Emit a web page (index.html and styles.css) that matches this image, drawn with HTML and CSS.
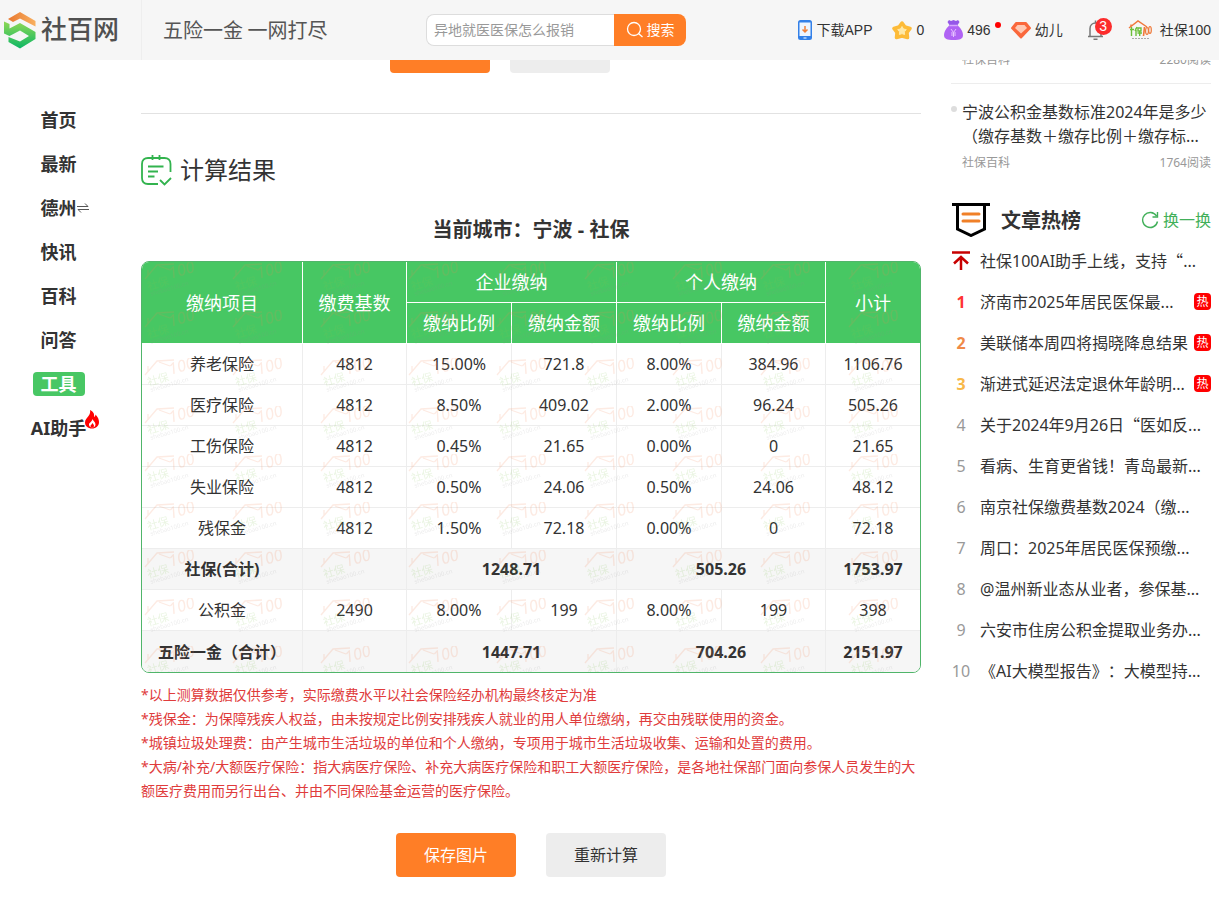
FILE: index.html
```html
<!DOCTYPE html>
<html lang="zh-CN">
<head>
<meta charset="utf-8">
<meta name="viewport" content="width=device-width, initial-scale=1">
<title>社保计算器 - 社百网</title>
<link rel="stylesheet" href="styles.css">
</head>
<body>
<header class="topbar">
  <a class="brand" href="#">
    <svg class="brand-mark" viewBox="0 0 32 38" aria-hidden="true">
      <defs>
        <linearGradient id="lo" x1="0" x2="1"><stop offset="0" stop-color="#e87830"/><stop offset="1" stop-color="#f8b060"/></linearGradient>
        <linearGradient id="lg" x1="0" x2="0" y1="0" y2="1"><stop offset="0" stop-color="#8fd855"/><stop offset="1" stop-color="#0cb765"/></linearGradient>
      </defs>
      <path fill="url(#lo)" d="M4 8 16 1l15.500 9v5.500L16 7.500 9 11z"/>
      <path fill="url(#lg)" d="M0 10.500 5.500 13v4.500L16 12l15.500 9v7L16 37.500 4.500 31v-5L16 30.500l9-5.500-9-5.500L5.500 25 0 22.500z"/>
    </svg>
    <span>社百网</span>
  </a>
  <p class="slogan">五险一金 一网打尽</p>
  <form class="search">
    <input type="search" aria-label="搜索内容" placeholder="异地就医医保怎么报销">
    <button type="button">
      <svg width="18" height="18" viewBox="0 0 18 18" fill="none" stroke="currentColor" stroke-width="1.300" aria-hidden="true"><circle cx="8" cy="8" r="6.500"/><path d="M12.500 12.500 16.500 16"/></svg>
      搜索
    </button>
  </form>
  <nav class="account" aria-label="账户">
    <a href="#">
      <svg width="14" height="20" viewBox="0 0 14 20" aria-hidden="true"><rect width="14" height="20" rx="2.500" fill="#3380e8"/><rect x="1.500" y="2.500" width="11" height="13.500" fill="#eef5ff"/><path d="M7 6v6M4.500 9.500 7 12l2.500-2.500" fill="none" stroke="#f08038" stroke-width="1.500"/><path d="M5.500 18h3" stroke="#fff"/></svg>
      下载APP
    </a>
    <a href="#">
      <svg width="20" height="20" viewBox="0 0 20 20" stroke-linejoin="round" aria-hidden="true"><path d="M10 3l3 4 5 1.500-3 4 .5 5L10 16l-5.500 1.500.5-5-3-4L7 7z" fill="#fdbb38" stroke="#fdbb38" stroke-width="3.500"/><path d="M10 6.500l1.500 2.500 2.800.6-1.900 2.200.2 2.700-2.600-.9-2.600.9.200-2.700-1.900-2.200 2.800-.6z" fill="#ffe9a8" stroke="#ffe9a8"/></svg>
      0
    </a>
    <a class="has-dot" href="#">
      <svg width="19" height="20" viewBox="0 0 19 20" aria-hidden="true"><path d="M5 0l2 1 2.500-1L12 1l2-1 1.500 2-2.500 4h-7L3.500 2z" fill="#9558e8"/><path d="M6 5h7c3 2 6 6.500 6 10 0 4-3 5-9.500 5S0 19 0 15C0 11.500 3 7 6 5z" fill="#b063f4"/><path d="M5.500 5.500h8" stroke="#d7a9ff" stroke-width="1.500"/><path d="M7 9l2.500 3.500L12 9M9.500 12.500V17M7 13h5M7 15h5" stroke="#e6c4ff" fill="none"/></svg>
      496
    </a>
    <a href="#">
      <svg width="20" height="18" viewBox="0 0 20 18" stroke-linejoin="round" aria-hidden="true"><path d="M5 2h10l4 5-9 9.500L1 7z" fill="#fa683c" stroke="#fa683c" stroke-width="2"/><path d="M6.500 4h7L16 7l-6 5.500L4 7z" fill="#ffc9b4"/></svg>
      幼儿
    </a>
    <a class="bell" href="#" aria-label="消息 3">
      <svg width="17" height="20" viewBox="0 0 17 20" fill="none" stroke="#777" stroke-width="1.500" aria-hidden="true"><path d="M1 16.500h15M3 16V8.500C3 5 5.500 3 8.500 3S14 5 14 8.500V16M8.500 3V.5M6.500 19.200h4"/></svg>
      <span class="count">3</span>
    </a>
    <a class="profile" href="#">
      <svg width="24" height="20" viewBox="0 0 24 20" fill="none" aria-hidden="true"><path d="M1 8 10 1l9 6M3 4.500V6" stroke="#f0783c" stroke-width="1.500"/><path d="M3.500 7v9M2 9.500h4M8 8v8M7 11l2-4M10 8h3v3h-3zM9.500 13H14M11.700 11v5" stroke="#6cbf3a" stroke-width="1.400"/><path d="M16.500 7 15.500 16" stroke="#ef7838" stroke-width="1.600"/><ellipse cx="19" cy="11" rx="1.400" ry="3.500" stroke="#ef7838" stroke-width="1.200"/><ellipse cx="22" cy="10" rx="1.300" ry="3.500" stroke="#ef7838" stroke-width="1.200"/><path d="M4 18.500h17" stroke="#aaa" stroke-dasharray="2 1"/></svg>
      社保100
    </a>
  </nav>
</header>

<div class="page">
  <nav class="sidenav" aria-label="主导航">
    <a href="#"><span>首页</span></a>
    <a href="#"><span>最新</span></a>
    <a href="#"><span>德州<svg class="swap" width="12" height="10" viewBox="0 0 12 10" fill="none" stroke="#555" aria-hidden="true"><path d="M0 3.500h11L8 .5M12 6.500H1l3 3"/></svg></span></a>
    <a href="#"><span>快讯</span></a>
    <a href="#"><span>百科</span></a>
    <a href="#"><span>问答</span></a>
    <a class="active" href="#"><span>工具</span></a>
    <a href="#"><span>AI助手<svg class="fire" width="14" height="19" viewBox="0 0 14 19" aria-hidden="true"><path d="M5 0c4 2 4.500 4.500 4 7 1-.5 1.500-1.500 1.500-2.500C13 7 14 9.500 14 12c0 4-3 6.500-7 6.500S0 16 0 12.500C0 9.500 2 8 3.500 6 5 4 5.500 2 5 0z" fill="#f00"/><path d="M7.500 9c.5 2 3 3 3 5.500 0 2-1.500 3-3.300 3S4 16.500 4 14.500C4 12.500 7 12 7.500 9z" fill="#fff"/><path d="M7.300 13c1 1.200 1.700 1.700 1.700 3 0 .8-.8 1.500-1.800 1.500S5.500 17 5.500 16c0-1 1.500-1.500 1.800-3z" fill="#f00"/></svg></span></a>
  </nav>

  <main class="content">
    <div class="form-actions">
      <button class="btn primary" type="button" aria-label="开始计算"></button>
      <button class="btn" type="button" aria-label="重置"></button>
    </div>
    <h2 class="result-title">
      <svg width="31" height="31" viewBox="0 0 31 31" fill="none" stroke="#32b34e" stroke-width="1.800" aria-hidden="true"><path d="M29.500 17V9c0-4-2.500-6-6-6H7C3.500 3 1 5 1 9v14c0 4 2.500 6 6 6h10"/><path d="M11.500 0v5M18.500 0v5M7 11.500h15.500M7 16.500h10M7 21.500h6.500M19 25l4.500 4.500L30 23"/></svg>
      计算结果
    </h2>
    <h3 class="city">当前城市：宁波 - 社保</h3>

    <div class="table-box">
      <table>
        <colgroup><col class="w-item"><col class="w-base"><col class="w-mid"><col class="w-mid"><col class="w-mid"><col class="w-base"><col></colgroup>
        <thead>
          <tr><th rowspan="2">缴纳项目</th><th rowspan="2">缴费基数</th><th colspan="2">企业缴纳</th><th colspan="2">个人缴纳</th><th rowspan="2" class="last">小计</th></tr>
          <tr><th>缴纳比例</th><th>缴纳金额</th><th>缴纳比例</th><th>缴纳金额</th></tr>
        </thead>
        <tbody>
          <tr><td>养老保险</td><td>4812</td><td>15.00%</td><td>721.8</td><td>8.00%</td><td>384.96</td><td>1106.76</td></tr>
          <tr><td>医疗保险</td><td>4812</td><td>8.50%</td><td>409.02</td><td>2.00%</td><td>96.24</td><td>505.26</td></tr>
          <tr><td>工伤保险</td><td>4812</td><td>0.45%</td><td>21.65</td><td>0.00%</td><td>0</td><td>21.65</td></tr>
          <tr><td>失业保险</td><td>4812</td><td>0.50%</td><td>24.06</td><td>0.50%</td><td>24.06</td><td>48.12</td></tr>
          <tr><td>残保金</td><td>4812</td><td>1.50%</td><td>72.18</td><td>0.00%</td><td>0</td><td>72.18</td></tr>
          <tr class="total"><td>社保(合计)</td><td></td><td colspan="2">1248.71</td><td colspan="2">505.26</td><td>1753.97</td></tr>
          <tr><td>公积金</td><td>2490</td><td>8.00%</td><td>199</td><td>8.00%</td><td>199</td><td>398</td></tr>
          <tr class="total"><td>五险一金（合计）</td><td></td><td colspan="2">1447.71</td><td colspan="2">704.26</td><td>2151.97</td></tr>
        </tbody>
      </table>
      <svg class="watermark" aria-hidden="true">
        <defs>
          <pattern id="wm" width="88" height="48" patternUnits="userSpaceOnUse">
            <path d="M3 17 15 3l17-1M6 14V8M17 4l11 4" fill="none" stroke="#f08050" stroke-width="1.300"/>
            <g transform="rotate(-16 8 30)">
              <text x="7" y="28" font-size="11" fill="#80c050">社保</text>
              <text x="31" y="23" font-size="16" font-style="italic" fill="#f08050">100</text>
              <text x="8" y="34" font-size="6" fill="#888">shebao100.cn</text>
            </g>
          </pattern>
        </defs>
        <rect width="100%" height="100%" fill="url(#wm)"/>
      </svg>
    </div>

    <div class="notes">
      <p>*以上测算数据仅供参考，实际缴费水平以社会保险经办机构最终核定为准</p>
      <p>*残保金：为保障残疾人权益，由未按规定比例安排残疾人就业的用人单位缴纳，再交由残联使用的资金。</p>
      <p>*城镇垃圾处理费：由产生城市生活垃圾的单位和个人缴纳，专项用于城市生活垃圾收集、运输和处置的费用。</p>
      <p>*大病/补充/大额医疗保险：指大病医疗保险、补充大病医疗保险和职工大额医疗保险，是各地社保部门面向参保人员发生的大额医疗费用而另行出台、并由不同保险基金运营的医疗保险。</p>
    </div>
    <div class="result-actions">
      <button class="btn primary" type="button">保存图片</button>
      <button class="btn" type="button">重新计算</button>
    </div>
  </main>

  <aside class="rail">
    <div class="meta meta-cut"><span>社保百科</span><span>2280阅读</span></div>
    <article class="news">
      <a href="#">宁波公积金基数标准2024年是多少（缴存基数＋缴存比例＋缴存标...</a>
      <div class="meta"><span>社保百科</span><span>1764阅读</span></div>
    </article>
    <div class="rank-head">
      <svg width="38" height="34" viewBox="0 0 38 34" fill="none" aria-hidden="true"><path d="M0 1.500h38" stroke="#000" stroke-width="3"/><path d="M5.500 2v24L19 32.500 32.500 26V2" stroke="#000" stroke-width="3"/><path d="M11 11h16M11 18h16" stroke="#f08028" stroke-width="3" stroke-linecap="round"/></svg>
      <h2>文章热榜</h2>
      <button type="button"><svg width="18" height="18" viewBox="0 0 18 18" fill="none" stroke="currentColor" stroke-width="1.400" aria-hidden="true"><path d="M16.500 10.500A7.500 7.500 0 1 1 15.500 5M16.500 1v5h-5"/></svg>换一换</button>
    </div>
    <ol class="rank">
      <li><span class="no"><svg width="18" height="19" viewBox="0 0 18 19" fill="none" stroke="#c80000" stroke-width="2.500" aria-label="置顶"><path d="M0 1.500h18M9 19V6M2 12.500 9 6l7 6.500"/></svg></span><a href="#">社保100AI助手上线，支持<span class="wide">“</span>...</a></li>
      <li><span class="no n1">1</span><a href="#">济南市2025年居民医保最...</a><em>热</em></li>
      <li><span class="no n2">2</span><a href="#">美联储本周四将揭晓降息结果</a><em>热</em></li>
      <li><span class="no n3">3</span><a href="#">渐进式延迟法定退休年龄明...</a><em>热</em></li>
      <li><span class="no">4</span><a href="#">关于2024年9月26日<span class="wide">“</span>医如反...</a></li>
      <li><span class="no">5</span><a href="#">看病、生育更省钱！青岛最新...</a></li>
      <li><span class="no">6</span><a href="#">南京社保缴费基数2024（缴...</a></li>
      <li><span class="no">7</span><a href="#">周口：2025年居民医保预缴...</a></li>
      <li><span class="no">8</span><a href="#">@温州新业态从业者，参保基...</a></li>
      <li><span class="no">9</span><a href="#">六安市住房公积金提取业务办...</a></li>
      <li><span class="no">10</span><a href="#">《AI大模型报告》：大模型持...</a></li>
    </ol>
  </aside>
</div>
</body>
</html>
```

FILE: styles.css
```css
* { box-sizing: border-box; }

body {
  margin: 0;
  background: #fff;
  color: #333;
  font: 16px/24px "Noto Sans", "Noto Sans CJK SC", sans-serif;
  text-spacing-trim: space-all;
}

h2, h3, p, ol { margin: 0; padding: 0; }
a { color: inherit; text-decoration: none; }
svg { flex: none; }
button { border: 0; font: inherit; cursor: pointer; }

.topbar {
  position: relative;
  z-index: 1;
  display: grid;
  grid-template-columns: 142px 284px 260px 1fr;
  align-items: center;
  height: 60px;
  background: #f6f6f6;
  font: 14px/24px "Liberation Sans", "Noto Sans CJK SC", sans-serif;
}

.brand {
  display: flex;
  align-items: center;
  gap: 5px;
  height: 100%;
  padding-left: 4px;
  border-right: 1px solid #eee;
  color: #505050;
  font-size: 26px;
  font-weight: 500;
  line-height: 36px;
}
.brand-mark { width: 32px; height: 38px; }

.slogan {
  padding-left: 21px;
  color: #555;
  font-family: KaiTi, STKaiti, "Noto Sans CJK SC", serif;
  font-size: 20px;
}

.search { display: flex; height: 32px; }
.search input {
  flex: 1;
  min-width: 0;
  padding: 0 7px;
  border: 1px solid #ddd;
  border-right: 0;
  border-radius: 8px 0 0 8px;
  background: #fff;
  font: inherit;
  outline: 0;
}
.search input::placeholder { color: #999; }
.search button {
  display: flex;
  align-items: center;
  justify-content: center;
  gap: 3px;
  width: 72px;
  padding: 0;
  border-radius: 0 8px 8px 0;
  background: #ff7e26;
  color: #fff;
}

.account {
  display: flex;
  justify-content: flex-end;
  gap: 20px;
  padding-right: 8px;
  white-space: nowrap;
}
.account a { position: relative; display: flex; align-items: center; gap: 4px; }
.account .profile { gap: 8px; }
.account .bell { margin: 0 4px; }
.has-dot::after {
  content: "";
  position: absolute;
  top: 4px;
  right: -10px;
  width: 6px;
  height: 6px;
  border-radius: 50%;
  background: #f00;
}
.count {
  position: absolute;
  top: 0;
  left: 8px;
  width: 17px;
  height: 17px;
  border-radius: 50%;
  background: #fc2c2c;
  color: #fff;
  line-height: 17px;
  text-align: center;
}

.page {
  display: grid;
  grid-template-columns: 111px minmax(0, 1fr) 260px;
  gap: 30px;
  padding: 0 8px 40px 0;
}

.sidenav { padding: 38px 0 0 6px; }
.sidenav a {
  display: flex;
  align-items: center;
  justify-content: center;
  height: 44px;
  font-size: 18px;
  font-weight: bold;
  white-space: nowrap;
}
.sidenav span { position: relative; }
.sidenav .active span {
  padding: 0 8px;
  border-radius: 4px;
  background: #48c764;
  color: #fff;
}
.swap { position: absolute; top: 7px; left: 100%; }
.fire { position: absolute; top: -6px; right: -13px; }

.form-actions {
  display: flex;
  justify-content: center;
  align-items: flex-end;
  gap: 20px;
  height: 54px;
  padding: 0 62px 40px 0;
  border-bottom: 1px solid #e2e2e2;
}
.form-actions .btn { width: 100px; height: 13px; border-radius: 0 0 4px 4px; }
.form-actions + .result-title { margin-top: 38px; }
.btn { width: 120px; height: 44px; border-radius: 4px; background: #ededed; color: #333; }
.btn.primary { background: #ff7e26; color: #fff; }

.result-title {
  display: flex;
  align-items: center;
  gap: 8px;
  font-size: 24px;
  font-weight: normal;
  line-height: 36px;
}
.city {
  margin: 27px 0 16px;
  font-size: 20px;
  line-height: 30px;
  text-align: center;
}

.table-box {
  position: relative;
  overflow: hidden;
  border: 1px solid #50b56a;
  border-radius: 8px;
}
table {
  width: 100%;
  table-layout: fixed;
  border-collapse: separate;
  border-spacing: 0;
  text-align: center;
}
.w-item { width: 161px; }
.w-base { width: 104px; }
.w-mid { width: 105px; }
th, td {
  height: 41px;
  padding: 0;
  border: 0 solid #ededed;
  border-width: 0 1px 1px 0;
}
th { background: #48c764; border-color: #fff; color: #fff; font-size: 18px; font-weight: normal; }
th.last, td:last-child { border-right: 0; }
tbody tr:last-child td { border-bottom: 0; }
.total td { background: #f6f6f6; font-weight: bold; }
.watermark {
  position: absolute;
  top: 0;
  left: 0;
  width: 100%;
  height: 100%;
  opacity: 0.16;
  pointer-events: none;
}

.notes { margin-top: 10px; color: #e03c3c; font-size: 14px; }
.result-actions { display: flex; justify-content: center; gap: 30px; margin-top: 30px; }

.meta { display: flex; justify-content: space-between; color: #999; font-size: 12px; line-height: 20px; }
.meta-cut {
  align-items: flex-end;
  height: 24px;
  padding: 0 0 13px 11px;
  border-bottom: 1px solid #ededed;
}
.news { position: relative; padding: 16px 0 0 11px; }
.news::before {
  content: "";
  position: absolute;
  top: 22px;
  left: 0;
  width: 6px;
  height: 6px;
  border-radius: 50%;
  background: #ddd;
}
.news a { display: block; margin-right: -4px; }
.news .meta { margin-top: 5px; }

.rank-head { display: flex; align-items: center; height: 40px; margin: 27px 0 0; padding-left: 1px; }
.rank-head h2 { margin-left: 11px; font-size: 20px; line-height: 24px; padding-top: 2px; }
.rank-head button {
  display: flex;
  align-items: center;
  gap: 4px;
  margin-left: auto;
  padding: 0;
  background: none;
  color: #42b05a;
}
.rank { list-style: none; }
.rank li { display: flex; align-items: center; height: 41px; white-space: nowrap; }
.rank a { flex: 1; min-width: 0; margin-left: 9px; }
.no { display: flex; justify-content: center; width: 20px; color: #999; }
.n1, .n2, .n3 { font-weight: bold; }
.n1 { color: #f33; }
.n2 { color: #f08a48; }
.n3 { color: #f8b848; }
.wide { font-family: "Noto Sans CJK SC", sans-serif; }
.rank em {
  flex: none;
  width: 17px;
  height: 17px;
  border-radius: 4px;
  background: #f00;
  color: #fff;
  font-size: 12px;
  font-style: normal;
  line-height: 17px;
  text-align: center;
}
```
